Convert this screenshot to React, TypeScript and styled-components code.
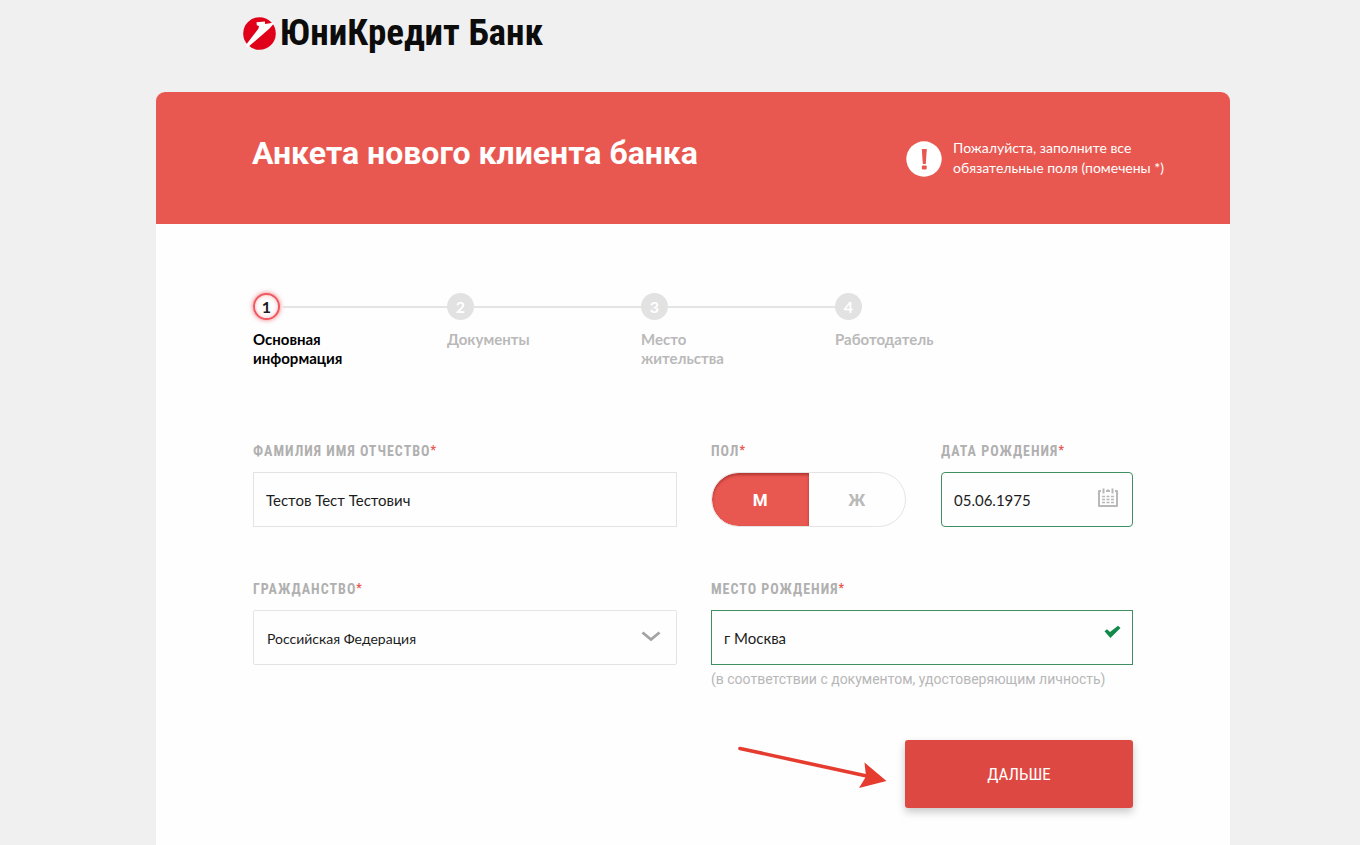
import React, { useState } from "react";
import styled, { createGlobalStyle, css } from "styled-components";

const red = "#e95850";
const green = "#3f8f63";
const line = "#e4e4e4";
const body = `Lato, "Noto Sans", sans-serif`;
const condensed = `"Roboto Condensed", Roboto, sans-serif`;

const GlobalStyle = createGlobalStyle`
  *, *::before, *::after { box-sizing: border-box; }
  body { margin: 0; background: #f0f0f0; color: #1c1c1c; font-family: ${body}; }
  #root { display: flex; flex-direction: column; min-height: 100vh; }
  input, select { font-family: inherit; margin: 0; }
`;

const Page = styled.div`
  flex: 1;
  display: flex;
  flex-direction: column;
  align-items: center;
  padding-left: 26px;
`;

const TopBar = styled.header`
  width: 100%;
  max-width: 1074px;
  height: 92px;
  padding: 8px 87px 0;
`;

const LogoLink = styled.a`
  display: inline-flex;
  align-items: center;
  gap: 4px;
  height: 50px;
  color: #0c0c0c;
  text-decoration: none;
  font: 700 37px/52px ${condensed};
  white-space: nowrap;
`;

const Card = styled.main`
  flex: 1;
  width: 100%;
  max-width: 1074px;
  background: #fefefe;
  border-radius: 9px 9px 0 0;
  overflow: hidden;
`;

const Banner = styled.div`
  display: flex;
  justify-content: space-between;
  min-height: 132px;
  padding: 39px 66px 0 96px;
  background: ${red};
  color: #fff;
`;

const Title = styled.h1`
  margin: 0;
  font: 700 32px/44px Roboto, sans-serif;
`;

const Notice = styled.div`
  display: flex;
  gap: 11px;
  padding-top: 7px;
`;

const NoticeIcon = styled.svg`
  margin-top: 3px;
`;

const NoticeText = styled.p`
  margin: 0;
  font-size: 14px;
  line-height: 20px;
`;

const Form = styled.form`
  padding: 69px 97px 37px;
`;

const Steps = styled.ol`
  display: grid;
  grid-template-columns: repeat(4, 194px);
  margin: 0;
  padding: 0;
  list-style: none;
`;

const StepNumber = styled.span<{ $active?: boolean }>`
  display: grid;
  place-items: center;
  width: 27px;
  height: 27px;
  border-radius: 50%;
  background: #e2e2e2;
  color: #fff;
  font-size: 16px;
  line-height: 20px;
  ${(p) =>
    p.$active &&
    css`
      background: #fff;
      color: #1c1c1c;
      border: 2px solid #ee5a60;
      box-shadow: 0 0 5px rgba(233, 60, 70, 0.7), inset 0 0 4px rgba(233, 60, 70, 0.35);
    `}
`;

const StepTrack = styled.div`
  display: flex;
  align-items: center;
`;

const StepLine = styled.span<{ $gap?: boolean }>`
  flex: 1;
  height: 2px;
  margin-left: ${(p) => (p.$gap ? "3px" : "0")};
  background: ${line};
`;

const Step = styled.li<{ $active?: boolean }>`
  color: ${(p) => (p.$active ? "#000" : "#b9b9b9")};
  font-weight: 700;
  font-size: 15px;
  line-height: 19px;
`;

const StepName = styled.span`
  display: block;
  width: 120px;
  margin-top: 10px;
`;

const Fields = styled.div`
  display: grid;
  grid-template-columns: 424fr 422fr;
  column-gap: 34px;
  row-gap: 52px;
  margin-top: 73px;
`;

const Split = styled.div`
  display: grid;
  grid-template-columns: 195fr 192fr;
  column-gap: 35px;
`;

const Field = styled.div`
  display: flex;
  flex-direction: column;
  min-width: 0;
`;

const Group = styled.fieldset`
  display: block;
  min-width: 0;
  margin: 0;
  padding: 0;
  border: 0;
`;

const labelText = css`
  display: block;
  padding: 0 0 11px;
  color: #b0b0b0;
  font: 700 14px/20px ${condensed};
  letter-spacing: 1px;
`;

const Label = styled.label`
  ${labelText}
`;

const Legend = styled.legend`
  ${labelText}
`;

const Required = styled.span`
  color: ${red};
  font-size: 12px;
  line-height: 12px;
  vertical-align: 2px;
`;

const Control = styled.div`
  position: relative;
  height: 55px;
`;

const box = css`
  width: 100%;
  height: 55px;
  background: transparent;
  color: #1c1c1c;
  outline: none;
`;

const TextInput = styled.input<{ $valid?: boolean; $rounded?: boolean }>`
  ${box}
  padding: 0 48px 0 12px;
  border: 1px solid ${(p) => (p.$valid ? green : line)};
  border-radius: ${(p) => (p.$rounded ? "4px" : "0")};
  font-size: 15px;
`;

const Select = styled.select`
  ${box}
  appearance: none;
  padding: 2px 48px 0 13px;
  border: 1px solid ${line};
  border-radius: 2px;
  font-size: 14px;
`;

const ControlIcon = styled.svg<{ $top: number; $right: number }>`
  position: absolute;
  top: ${(p) => p.$top}px;
  right: ${(p) => p.$right}px;
  pointer-events: none;
`;

const Toggle = styled.div`
  display: flex;
  height: 55px;
  border: 1px solid ${line};
  border-radius: 28px;
  overflow: hidden;
`;

const ToggleOption = styled.label`
  flex: 1;
  display: grid;
  place-items: center;
  color: #bababa;
  font: 700 17px/24px Roboto, sans-serif;
  cursor: pointer;
  &:first-child {
    border-radius: 27px 0 0 27px;
  }
  &:last-child {
    border-radius: 0 27px 27px 0;
  }
  &:has(input:checked) {
    background: ${red};
    color: #fff;
    box-shadow: inset 0 2px 3px rgba(120, 20, 20, 0.5);
  }
  &:has(input:focus-visible) {
    text-decoration: underline;
  }
`;

const HiddenRadio = styled.input`
  position: absolute;
  opacity: 0;
  pointer-events: none;
`;

const Hint = styled.small`
  margin-top: 4px;
  color: #b7b7b7;
  font: 400 14px/20px Roboto, sans-serif;
`;

const Actions = styled.div`
  display: flex;
  justify-content: flex-end;
  align-items: flex-start;
  gap: 18px;
  margin-top: 51px;
`;

const Submit = styled.button`
  width: 228px;
  height: 68px;
  margin: 0;
  border: 0;
  border-radius: 3px;
  background: #de4842;
  color: #fff;
  font: 400 17px/24px ${condensed};
  box-shadow: 0 4px 9px rgba(0, 0, 0, 0.22);
  cursor: pointer;
`;

const steps = ["Основная информация", "Документы", "Место жительства", "Работодатель"];

function Star() {
  return <Required>*</Required>;
}

export default function App() {
  const [sex, setSex] = useState("m");
  return (
    <Page>
      <GlobalStyle />
      <TopBar>
        <LogoLink href="#">
          <svg width="33" height="33" viewBox="0 0 33 33" aria-hidden="true">
            <circle cx="16.500" cy="16.500" r="16.300" fill="#e1001a" />
            <path d="M13.500 5.200 22 4.600 22 7 31.800 5.600 26.500 11.500 4.500 30.500 2.500 28.500 15.500 11.500 16 9 13.800 8.300Z" fill="#fff" />
          </svg>
          ЮниКредит Банк
        </LogoLink>
      </TopBar>
      <Card>
        <Banner>
          <Title>Анкета нового клиента банка</Title>
          <Notice>
            <NoticeIcon width="36" height="36" viewBox="0 0 36 36" aria-hidden="true">
              <circle cx="18" cy="18" r="17.700" fill="#fff" />
              <path d="M15.800 8h5l-1 15h-3z" fill={red} />
              <rect x="15.900" y="24.600" width="4.800" height="4" rx="1" fill={red} />
            </NoticeIcon>
            <NoticeText>
              Пожалуйста, заполните все
              <br />
              обязательные поля (помечены *)
            </NoticeText>
          </Notice>
        </Banner>
        <Form onSubmit={(e) => e.preventDefault()}>
          <Steps>
            {steps.map((name, i) => (
              <Step key={name} $active={i === 0} aria-current={i === 0 ? "step" : undefined}>
                <StepTrack>
                  <StepNumber $active={i === 0}>{i + 1}</StepNumber>
                  {i < steps.length - 1 && <StepLine $gap={i === 0} />}
                </StepTrack>
                <StepName>{name}</StepName>
              </Step>
            ))}
          </Steps>
          <Fields>
            <Field>
              <Label htmlFor="fio">ФАМИЛИЯ ИМЯ ОТЧЕСТВО<Star /></Label>
              <Control>
                <TextInput id="fio" defaultValue="Тестов Тест Тестович" />
              </Control>
            </Field>
            <Split>
              <Group>
                <Legend>ПОЛ<Star /></Legend>
                <Toggle>
                  <ToggleOption>
                    <HiddenRadio type="radio" name="sex" checked={sex === "m"} onChange={() => setSex("m")} />
                    М
                  </ToggleOption>
                  <ToggleOption>
                    <HiddenRadio type="radio" name="sex" checked={sex === "f"} onChange={() => setSex("f")} />
                    Ж
                  </ToggleOption>
                </Toggle>
              </Group>
              <Field>
                <Label htmlFor="birthday">ДАТА РОЖДЕНИЯ<Star /></Label>
                <Control>
                  <TextInput id="birthday" defaultValue="05.06.1975" $valid $rounded />
                  <ControlIcon $top={16} $right={15} width="20" height="20" viewBox="0 0 20 20" fill="none" stroke="#b8b8b8" aria-hidden="true">
                    <path d="M3 3H1V18H19V3H17M8 3H12" strokeWidth="2" strokeLinejoin="round" />
                    <path d="M5.500 0.500V5.500M14.500 0.500V5.500" strokeWidth="2" />
                    <path d="M10 1V4" strokeWidth="1" />
                    <path d="M4 8.500h3M8.500 8.500h3M13 8.500h3M4 11.500h3M8.500 11.500h3M13 11.500h3M4 14.500h3M8.500 14.500h3M13 14.500h3" strokeWidth="1.600" />
                  </ControlIcon>
                </Control>
              </Field>
            </Split>
            <Field>
              <Label htmlFor="citizenship">ГРАЖДАНСТВО<Star /></Label>
              <Control>
                <Select id="citizenship" defaultValue="ru">
                  <option value="ru">Российская Федерация</option>
                </Select>
                <ControlIcon $top={21} $right={16} width="20" height="12" viewBox="0 0 20 12" fill="none" stroke="#a2a2a2" aria-hidden="true">
                  <path d="M1.500 1.500 10 8.500 18.500 1.500" strokeWidth="2.800" />
                </ControlIcon>
              </Control>
            </Field>
            <Field>
              <Label htmlFor="birthplace">МЕСТО РОЖДЕНИЯ<Star /></Label>
              <Control>
                <TextInput id="birthplace" defaultValue="г Москва" $valid aria-describedby="birthplace-hint" />
                <ControlIcon $top={15} $right={12} width="17" height="14" viewBox="0 0 17 14" aria-hidden="true">
                  <path d="M0.500 6.200 3 4.200 6 7 14 0.800 16.500 3 6.400 13Z" fill="#118a4c" />
                </ControlIcon>
              </Control>
              <Hint id="birthplace-hint">(в соответствии с документом, удостоверяющим личность)</Hint>
            </Field>
          </Fields>
          <Actions>
            <svg width="150" height="52" viewBox="0 0 150 52" aria-hidden="true">
              <path d="M3 8.500 132 36.500" stroke="#e63c30" strokeWidth="3.600" strokeLinecap="round" />
              <path d="M127.500 22.500 149.500 41 122 48 129 36.500Z" fill="#e63c30" />
            </svg>
            <Submit type="submit">ДАЛЬШЕ</Submit>
          </Actions>
        </Form>
      </Card>
    </Page>
  );
}
